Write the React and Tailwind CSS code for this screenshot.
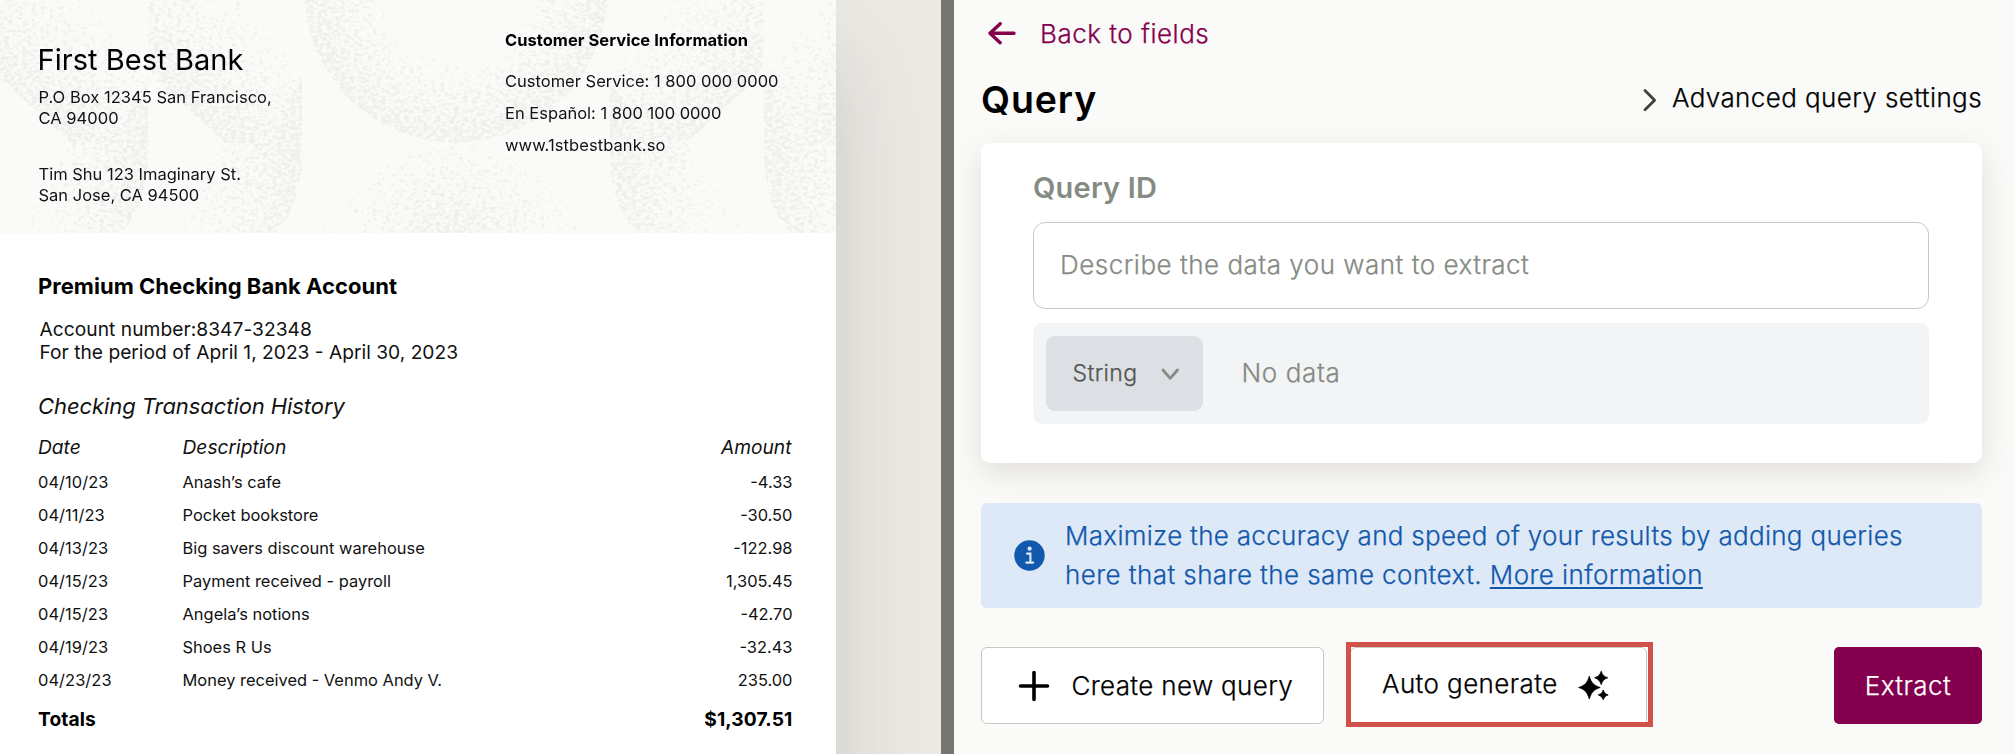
const transactions = [
  ["04/10/23", "Anash’s cafe", "-4.33"],
  ["04/11/23", "Pocket bookstore", "-30.50"],
  ["04/13/23", "Big savers discount warehouse", "-122.98"],
  ["04/15/23", "Payment received - payroll", "1,305.45"],
  ["04/15/23", "Angela’s notions", "-42.70"],
  ["04/19/23", "Shoes R Us", "-32.43"],
  ["04/23/23", "Money received - Venmo Andy V.", "235.00"],
];

function Petal({ x }) {
  return (
    <g transform={`translate(${x} 0)`}>
      <path d="M0 0H90L154 75L120 143H77L8 80Q0 70 0 50Z" fill="url(#fadeDiagonal)" />
      <path d="M154 75V150C154 190 145 215 127 233H10L77 143H120Z" fill="url(#fadeRight)" />
    </g>
  );
}

function PatternHalf() {
  return (
    <g>
      <Petal x={-6} />
      <Petal x={148} />
      <path d="M304 -10A152 153 0 0 0 456 143V-10Z" fill="url(#ring)" />
      <path d="M320 233C350 180 400 150 456 143V233Z" fill="url(#hill)" />
    </g>
  );
}

function HeaderPattern() {
  return (
    <svg className="absolute inset-0" width="836" height="233" viewBox="0 0 836 233" aria-hidden="true">
      <defs>
        <linearGradient id="fadeDiagonal" gradientUnits="userSpaceOnUse" x1="20" y1="93" x2="88" y2="17">
          <stop offset="0" stopColor="#000" stopOpacity="0.62" />
          <stop offset="1" stopColor="#000" stopOpacity="0.4" />
        </linearGradient>
        <linearGradient id="fadeRight" gradientUnits="userSpaceOnUse" x1="30" y1="0" x2="154" y2="0">
          <stop offset="0" stopColor="#000" stopOpacity="0.34" />
          <stop offset="1" stopColor="#000" stopOpacity="0.62" />
        </linearGradient>
        <radialGradient id="ring" gradientUnits="userSpaceOnUse" cx="456" cy="-10" r="153">
          <stop offset="0.4" stopColor="#000" stopOpacity="0.25" />
          <stop offset="0.6" stopColor="#000" stopOpacity="0.46" />
          <stop offset="1" stopColor="#000" stopOpacity="0.62" />
        </radialGradient>
        <radialGradient id="hill" gradientUnits="userSpaceOnUse" cx="456" cy="245" r="120">
          <stop offset="0" stopColor="#000" stopOpacity="0.63" />
          <stop offset="1" stopColor="#000" stopOpacity="0.36" />
        </radialGradient>
        <filter id="stipple" filterUnits="userSpaceOnUse" x="0" y="0" width="836" height="233" colorInterpolationFilters="sRGB">
          <feTurbulence type="fractalNoise" baseFrequency="0.22 0.3" numOctaves="2" seed="4" />
          <feColorMatrix values="0 0 0 0 0  0 0 0 0 0  0 0 0 0 0  0 0 0 1 0" result="noise" />
          <feComposite in="noise" in2="SourceGraphic" operator="arithmetic" k2="1" k3="1" k4="-1" />
          <feComponentTransfer result="grain">
            <feFuncA type="linear" slope="6" />
          </feComponentTransfer>
          <feFlood floodColor="#f1efed" />
          <feComposite in2="grain" operator="in" />
        </filter>
      </defs>
      <g filter="url(#stipple)">
        <PatternHalf />
        <g transform="translate(912 0) scale(-1 1)">
          <PatternHalf />
        </g>
      </g>
    </svg>
  );
}

function Statement() {
  return (
    <section className="w-[941px] shrink-0 overflow-hidden bg-[#eae9e4]">
      <div className="h-[900px] w-[836px] bg-white pb-2 text-[16.5px] text-[#111] shadow-[0_60px_80px_rgba(80,76,66,0.2)]">
        <header className="relative h-[233px] bg-[#fafaf8]">
          <HeaderPattern />
          <div className="relative flex pl-[37.5px]">
            <div className="w-[467.5px] pt-[42px]">
              <h1 className="text-[29px] leading-[36px] tracking-[0.05px] text-black">First Best Bank</h1>
              <p className="mt-[9px] pl-px leading-[20.7px] tracking-[0.03px]">
                P.O Box 12345 San Francisco,
                <br />
                CA 94000
              </p>
              <p className="mt-[36px] pl-px leading-[20.7px]">
                Tim Shu 123 Imaginary St.
                <br />
                San Jose, CA 94500
              </p>
            </div>
            <div className="pt-[27.5px]">
              <h2 className="leading-[24px] font-bold tracking-[0.03px] text-black">Customer Service Information</h2>
              <div className="mt-[13px] leading-[32px]">
                <p>Customer Service: 1 800 000 0000</p>
                <p>En Español: 1 800 100 0000</p>
                <p className="tracking-[0.08px]">www.1stbestbank.so</p>
              </div>
            </div>
          </div>
        </header>
        <div className="w-[792.5px] pl-[38px]">
          <h2 className="pt-[39px] text-[22px] leading-[28px] font-bold tracking-[0.03px] text-black">Premium Checking Bank Account</h2>
          <p className="mt-[17.5px] pl-[1.5px] text-[19.2px] leading-[23.2px]">
            <span className="tracking-[0.04px]">Account number:8347-32348</span>
            <br />
            For the period of April 1, 2023 - April 30, 2023
          </p>
          <h3 className="mt-[28px] text-[22px] leading-[28px] tracking-[-0.08px] italic">Checking Transaction History</h3>
          <div className="mt-[13px] flex text-[19.2px] leading-[28px] italic">
            <span className="w-[144.5px]">Date</span>
            <span>Description</span>
            <span className="mr-px ml-auto">Amount</span>
          </div>
          <div className="mt-[4.9px] text-[16.45px]">
            {transactions.map(([date, description, amount]) => (
              <div key={date + description} className="flex leading-[33.1px]">
                <span className="w-[144.5px] tracking-[0.05px]">{date}</span>
                <span>{description}</span>
                <span className="ml-auto">{amount}</span>
              </div>
            ))}
          </div>
          <div className="mt-[8px] flex justify-between text-[19.2px] leading-[28px] font-bold text-black">
            <span className="tracking-[0.1px]">Totals</span>
            <span className="tracking-[0.1px]">$1,307.51</span>
          </div>
        </div>
      </div>
    </section>
  );
}

function QueryCard() {
  return (
    <div className="mt-[21px] h-[320px] rounded-[9px] bg-white pt-[27px] pr-[53px] pl-[52px] shadow-[0_10px_30px_rgba(80,70,40,0.15)]">
      <label className="block text-[29px] leading-[36px] font-semibold tracking-[0.2px] text-[#858b83] [-webkit-text-stroke:0px]">Query ID</label>
      <div className="mt-[16px] flex h-[87px] items-center rounded-[12px] border border-[#c9c9c3] pb-[2px] pl-[26px] text-[#858b83]">
        <span className="tracking-[0.5px]">Describe the data you want to extract</span>
      </div>
      <div className="mt-[14px] flex h-[101px] items-center rounded-[9px] bg-[#f3f4f6] pl-[13px] text-[#858b83]">
        <div className="flex h-[75px] w-[157px] items-center rounded-[9px] bg-[#dcdfe4] pl-[26.5px]">
          <span className="text-[23px] tracking-[0.4px] text-[#55554f]">String</span>
          <svg className="ml-[22px]" width="20" height="14" viewBox="0 0 20 14" fill="none" stroke="#858b83" strokeWidth="2.8" strokeLinecap="round" strokeLinejoin="round">
            <path d="M3 3L10.2 11.3L17.5 3" />
          </svg>
        </div>
        <span className="-mt-[2px] ml-[38.5px] tracking-[0.6px]">No data</span>
      </div>
    </div>
  );
}

function Sparkles() {
  return (
    <svg width="33" height="32" viewBox="0 0 33 32" fill="#000" stroke="#000" strokeWidth="0.8" strokeLinejoin="round">
      <path d="M11.3 6.2C13.2 12.6 15.6 15.4 22.2 17.5C15.6 19.6 13.2 22.6 11.3 29C9.4 22.6 7 19.6 0.6 17.5C7 15.4 9.4 12.6 11.3 6.2Z" />
      <path d="M23.2 1.2C24.5 5 26 6.6 29.8 7.8C26 9 24.5 10.8 23.2 14.6C21.9 10.8 20.4 9 16.6 7.8C20.4 6.6 21.9 5 23.2 1.2Z" />
      <path d="M25.2 20C26.2 22.8 27.4 24 30.2 24.9C27.4 25.8 26.2 27 25.2 29.8C24.2 27 23 25.8 20.2 24.9C23 24 24.2 22.8 25.2 20Z" />
    </svg>
  );
}

function QueryPanel() {
  return (
    <main className="h-[754px] min-w-0 flex-1 bg-[#fafaf8] pr-[33px] pl-[27px] text-[26px] leading-[39px] font-light text-black [-webkit-text-stroke:0.25px]">
      <a className="flex items-center pt-[14px] pl-[6px] text-[#84004f]">
        <svg width="30" height="24" viewBox="0 0 30 24" fill="none" stroke="currentColor" strokeWidth="3.4" strokeLinecap="round" strokeLinejoin="round">
          <path d="M13.2 1.7L3 11.2L13.2 20.7M3.5 11.2H27" />
        </svg>
        <span className="ml-[23px] tracking-[0.5px]">Back to fields</span>
      </a>
      <div className="mt-[25px] flex justify-between">
        <h1 className="text-[37.5px] leading-[44px] font-semibold tracking-[0.9px] [-webkit-text-stroke:0px]">Query</h1>
        <button className="flex h-[39px] items-center">
          <svg className="mt-1 mr-[14px]" width="18" height="26" viewBox="0 0 18 26" fill="none" stroke="#3f3f3b" strokeWidth="2.8" strokeLinecap="round" strokeLinejoin="round">
            <path d="M5 3.5L14.6 13.2L5 22.8" />
          </svg>
          <span className="tracking-[0.4px]">Advanced query settings</span>
        </button>
      </div>
      <QueryCard />
      <div className="mt-[40px] flex h-[105px] items-center rounded-[6px] bg-[#dee9f7] pl-[33px] text-[#1258ac]">
        <svg width="31" height="31" viewBox="0 0 31 31">
          <circle cx="15.5" cy="15.5" r="15.2" fill="#1258ac" />
          <circle cx="15.6" cy="8.7" r="2.1" fill="#dee9f7" />
          <path d="M13 13.6H16.4V22.4M12.3 22.6H19.2" fill="none" stroke="#dee9f7" strokeWidth="2.1" strokeLinecap="round" />
        </svg>
        <p className="-mt-[2px] ml-[20px] tracking-[0.3px] whitespace-nowrap">
          Maximize the accuracy and speed of your results by adding queries
          <br />
          <span className="tracking-[0.42px]">
            here that share the same context.{" "}
            <a className="underline decoration-2 underline-offset-[3px]">More information</a>
          </span>
        </p>
      </div>
      <div className="mt-[39px] flex">
        <button className="flex h-[77px] w-[343px] items-center rounded-[6px] border border-[#c9c9c3] bg-white pl-[36px]">
          <svg width="32" height="32" viewBox="0 0 32 32" fill="none" stroke="#000" strokeWidth="3.6" strokeLinecap="round">
            <path d="M16 2.5V29.5M2.5 16H29.5" />
          </svg>
          <span className="ml-[21.5px] tracking-[0.35px]">Create new query</span>
        </button>
        <div className="-mt-[5px] ml-[22px] h-[85px] w-[307px] overflow-hidden border-[5px] border-[#d1514a] bg-white">
          <button className="-ml-px flex h-[80px] w-[297px] items-center rounded-[6px] border border-[#c9c9c3] pb-[8px] pl-[31px]">
            <span className="tracking-[0.4px]">Auto generate</span>
            <span className="mt-[6px] ml-[20.5px]">
              <Sparkles />
            </span>
          </button>
        </div>
        <button className="ml-auto h-[77px] w-[148px] rounded-[5px] bg-[#84004f] tracking-[0.45px] text-white">Extract</button>
      </div>
    </main>
  );
}

export default function App() {
  return (
    <div className="flex h-[754px] w-[2015px] overflow-hidden font-['Inter',sans-serif]">
      <Statement />
      <div className="w-[13px] shrink-0 bg-[#767570]" />
      <QueryPanel />
    </div>
  );
}
